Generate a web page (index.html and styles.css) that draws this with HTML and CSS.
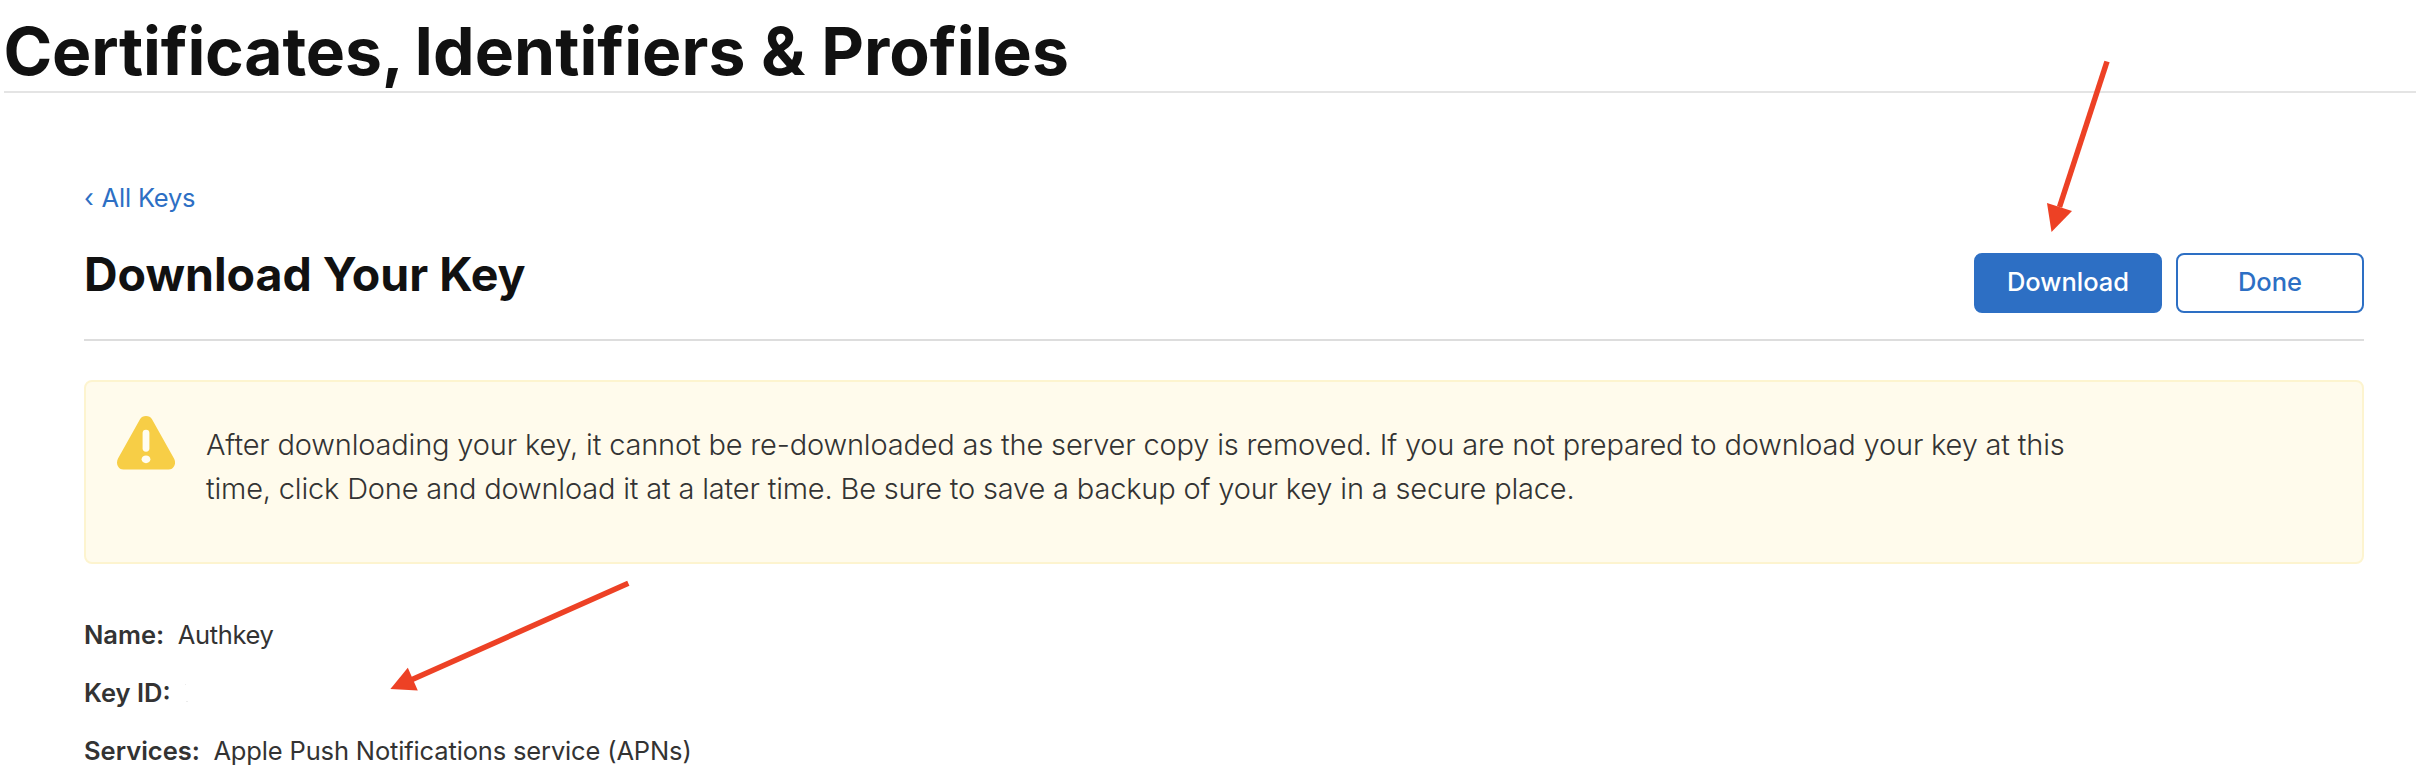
FILE: index.html
```
<!DOCTYPE html>
<html lang="en">
<head>
<meta charset="utf-8">
<title>Certificates, Identifiers &amp; Profiles</title>
<link rel="stylesheet" href="styles.css">
</head>
<body>
<header class="page-header">
  <h1 class="page-title">Certificates, <span class="page-title-rest">Identifiers &amp; Profiles</span></h1>
</header>
<main class="content">
  <a class="back-link">‹ <span class="back-label">All Keys</span></a>
  <div class="toolbar">
    <h2 class="section-title">Download Your Key</h2>
    <div class="actions">
      <button class="btn btn-primary">Download</button>
      <button class="btn btn-secondary">Done</button>
    </div>
  </div>
  <section class="alert">
    <svg class="alert-icon" width="58" height="54" viewBox="0 0 58 54">
      <path fill="#f7ce46" d="M23 3.2Q25 0 29 0T35 3.2L57 42.500Q59 46.500 57.200 50T51.500 53.500H6.500Q2.500 53.500 .8 50T1 42.500Z"/>
      <rect fill="#fffdf2" x="25.600" y="13.700" width="6.800" height="22" rx="3.400"/>
      <ellipse fill="#fffdf2" cx="29" cy="43.300" rx="4.400" ry="3.900"/>
    </svg>
    <p class="alert-text">After downloading your key, it cannot be re-downloaded as the server copy is removed. If you are not prepared to download your key at this<br>time, click Done and download it at a later time. Be sure to save a backup of your key in a secure place.</p>
  </section>
  <dl class="details">
    <div class="detail"><dt>Name:</dt><dd class="detail-name">Authkey</dd></div>
    <div class="detail"><dt>Key ID:</dt><dd></dd></div>
    <div class="detail"><dt>Services:</dt><dd>Apple Push Notifications service (APNs)</dd></div>
  </dl>
</main>
<svg class="annotations" width="2416" height="768" viewBox="0 0 2416 768">
  <path fill="#ececec" d="M185 684h1v1h-1zM186 701h2v1h-2z"/>
  <g stroke="#ed4125" stroke-width="5.500" fill="#ed4125">
    <path d="M2107 61.500L2059.500 207"/>
    <path stroke="none" d="M2051.500 232L2047 203L2072 211Z"/>
    <path d="M628.300 583.300L411 680"/>
    <path stroke="none" d="M390.400 689L407.800 667.700L417.800 690.500Z"/>
  </g>
</svg>
</body>
</html>
```
FILE: styles.css
```
* { box-sizing: border-box; }

body {
  position: relative;
  margin: 0;
  height: 768px;
  overflow: hidden;
  background: #fff;
  color: #333;
  font-family: Inter, "Liberation Sans", sans-serif;
  font-size: 25.5px;
}

.page-header {
  margin-left: 4px;
  padding-top: 11px;
  border-bottom: 2px solid #e4e4e4;
}

.page-title {
  margin: 0 0 0 -0.6px;
  color: #111;
  font-size: 66px;
  font-weight: 700;
  line-height: 80px;
  letter-spacing: -0.2px;
  white-space: nowrap;
}

.page-title-rest {
  margin-left: -2.5px;
  letter-spacing: 0.05px;
}

.content { padding: 85px 52px 0 84px; }

.back-link {
  display: block;
  color: #2d6fc4;
  line-height: 40px;
  letter-spacing: -0.2px;
}

.back-label { margin-left: 1px; }

.toolbar {
  display: flex;
  justify-content: space-between;
  align-items: flex-start;
  padding: 26px 0;
  border-bottom: 2px solid #ddd;
}

.section-title {
  margin: 0;
  color: #111;
  font-size: 46.5px;
  font-weight: 700;
  line-height: 60px;
}

.actions {
  display: flex;
  gap: 14px;
  padding-top: 9px;
}

.btn {
  width: 188px;
  height: 60px;
  padding: 0 0 3px;
  border: 2px solid #2d6fc4;
  border-radius: 8px;
  font: 500 25.5px Inter, sans-serif;
}

.btn-primary { background: #2d6fc4; color: #fff; }
.btn-secondary { background: #fff; color: #2d6fc4; }

.alert {
  display: flex;
  align-items: flex-start;
  gap: 31px;
  height: 184px;
  margin-top: 39px;
  padding: 34px 31px 0;
  border: 2px solid #fdf4cf;
  border-radius: 8px;
  background: #fffbec;
}

.alert-icon { flex: none; }

.alert-text {
  margin: 0;
  padding-top: 7px;
  font-size: 29px;
  font-weight: 300;
  line-height: 44px;
  letter-spacing: -0.178px;
  white-space: nowrap;
}

.details { margin: 42px 0 0; }

.detail {
  display: flex;
  gap: 13.5px;
  line-height: 58px;
}

.detail dt { font-weight: 600; }
.detail dd { margin: 0; letter-spacing: -0.15px; }
.detail .detail-name { letter-spacing: -0.35px; }

.annotations {
  position: absolute;
  inset: 0;
  pointer-events: none;
}
```
